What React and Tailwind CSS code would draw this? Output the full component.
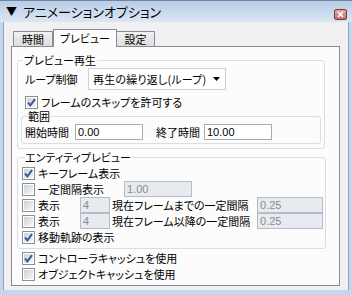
import { useState } from "react";

function Check({ checked }) {
  return (
    <span className="flex h-[13px] w-[13px] shrink-0 items-center justify-center border border-[#8e8f8f] bg-white p-[1px]">
      <span className="relative flex h-full w-full items-center justify-center bg-gradient-to-br from-[#cfd3d8] to-[#f4f5f6]">
        {checked && (
          <svg width="11" height="11" viewBox="0 0 11 11" className="absolute">
            <path d="M2 5.5 L4.4 8.3 L9 2.2" fill="none" stroke="#3b5a9c" strokeWidth="2" />
          </svg>
        )}
      </span>
    </span>
  );
}

function CheckRow({ checked, label, className = "" }) {
  return (
    <div className={`flex h-[16px] items-center gap-[3px] ${className}`}>
      <Check checked={checked} />
      <span>{label}</span>
    </div>
  );
}

function Field({ value, disabled, className = "" }) {
  return (
    <div
      className={`flex h-[16px] items-center border px-[2px] font-['Liberation_Sans',sans-serif] text-[11px] ${
        disabled
          ? "border-[#b3bcc9] bg-[#e7eaef] text-[#8c8c8c]"
          : "border-[#a9abb2] bg-white text-black"
      } ${className}`}
    >
      {value}
    </div>
  );
}

export default function App() {
  const [tab] = useState("preview");

  return (
    <div className="flex h-[295px] w-[352px] flex-col bg-[#c4d7ec] font-['Noto_Sans_CJK_JP',sans-serif] text-[11px] leading-none text-black [font-feature-settings:'palt']">
      {/* title bar */}
      <div className="flex h-[22px] shrink-0 items-center border-t border-[#71869c] bg-gradient-to-b from-[#b7cde6] to-[#dbe7f4] pl-[6px] pr-[5px]">
        <span className="text-[11px]">▼</span>
        <span className="ml-[6px] text-[13px]">アニメーションオプション</span>
        <span className="ml-auto mt-[5px] flex h-[11px] w-[13px] items-center justify-center rounded-[2px] border border-[#7a3b3b] bg-gradient-to-b from-[#e3aaa6] to-[#c86f69]">
          <svg width="7" height="7" viewBox="0 0 7 7">
            <path d="M1 1 L6 6 M6 1 L1 6" stroke="#ffffff" strokeWidth="1.6" />
          </svg>
        </span>
      </div>

      {/* body */}
      <div className="mx-[3px] mb-[5px] flex flex-1 flex-col border-x border-[#8da3bd] bg-[#f0f0f0] pl-[7px] pt-[6px]">
        {/* tabs */}
        <div className="relative z-10 ml-[2px] flex h-[18px] items-end">
          <div className="flex h-[15px] w-[40px] items-center justify-center border border-b-0 border-[#898c95] bg-gradient-to-b from-[#f2f2f2] to-[#dcdcdc]">
            時間
          </div>
          <div
            className={`-mb-[1px] flex h-[18px] w-[64px] items-center justify-center border border-b-0 border-[#898c95] ${
              tab === "preview" ? "bg-[#fcfcfc]" : ""
            }`}
          >
            プレビュー
          </div>
          <div className="flex h-[15px] w-[38px] items-center justify-center border border-b-0 border-l-0 border-[#898c95] bg-gradient-to-b from-[#f2f2f2] to-[#dcdcdc]">
            設定
          </div>
        </div>

        {/* panel */}
        <div className="flex h-[240px] w-[329px] flex-col border border-[#898c95] bg-[#fcfcfc] pl-[5px] pr-[14px]">
          {/* preview playback group */}
          <fieldset className="mt-[7px] rounded-[3px] border border-[#d5dfe5] pb-[4px] pl-[3px] pr-[3px]">
            <legend className="ml-[2px] px-[1px] leading-[12px]">プレビュー再生</legend>
            <div className="mt-[2px] flex h-[22px] items-center pl-[4px]">
              <span className="w-[63px]">ループ制御</span>
              <div className="flex h-[22px] w-[138px] items-center border border-[#d0d0d0] bg-white pl-[4px] pr-[5px]">
                <span className="tracking-[0.2px]">再生の繰り返し(ループ)</span>
                <svg width="7" height="4" viewBox="0 0 7 4" className="ml-auto">
                  <path d="M0 0 H7 L3.5 4 Z" fill="#000" />
                </svg>
              </div>
            </div>
            <CheckRow checked label="フレームのスキップを許可する" className="ml-[4px] mt-[4px] h-[14px]" />
            <fieldset className="rounded-[3px] border border-[#d5dfe5] pb-[3px] pl-[3px]">
              <legend className="ml-[3px] leading-[12px]">範囲</legend>
              <div className="mt-[2px] flex items-center">
                <span className="w-[50px]">開始時間</span>
                <Field value="0.00" className="w-[68px]" />
                <span className="ml-[13px] w-[48px]">終了時間</span>
                <Field value="10.00" className="w-[68px]" />
              </div>
            </fieldset>
          </fieldset>

          {/* entity preview group */}
          <fieldset className="mt-[2px] rounded-[3px] border border-[#d5dfe5] pb-[3px] pl-[4px] pr-[2px] pt-[2px]">
            <legend className="ml-[3px] leading-[12px]">エンティティプレビュー</legend>
            <CheckRow checked label="キーフレーム表示" />
            <div className="flex h-[16px] items-center">
              <CheckRow label="一定間隔表示" className="w-[102px]" />
              <Field value="1.00" disabled className="w-[68px]" />
            </div>
            <div className="flex h-[16px] items-center">
              <CheckRow label="表示" className="w-[58px]" />
              <Field value="4" disabled className="w-[30px] border-[#a8c0dc]" />
              <span className="ml-[2px] w-[145px]">現在フレームまでの一定間隔</span>
              <Field value="0.25" disabled className="w-[66px]" />
            </div>
            <div className="flex h-[16px] items-center">
              <CheckRow label="表示" className="w-[58px]" />
              <Field value="4" disabled className="w-[30px] border-[#a8c0dc]" />
              <span className="ml-[2px] w-[145px]">現在フレーム以降の一定間隔</span>
              <Field value="0.25" disabled className="w-[66px]" />
            </div>
            <CheckRow checked label="移動軌跡の表示" />
          </fieldset>

          <div className="mt-[1px] pl-[5px]">
            <CheckRow checked label="コントローラキャッシュを使用" />
            <CheckRow label="オブジェクトキャッシュを使用" />
          </div>
        </div>
      </div>
    </div>
  );
}
